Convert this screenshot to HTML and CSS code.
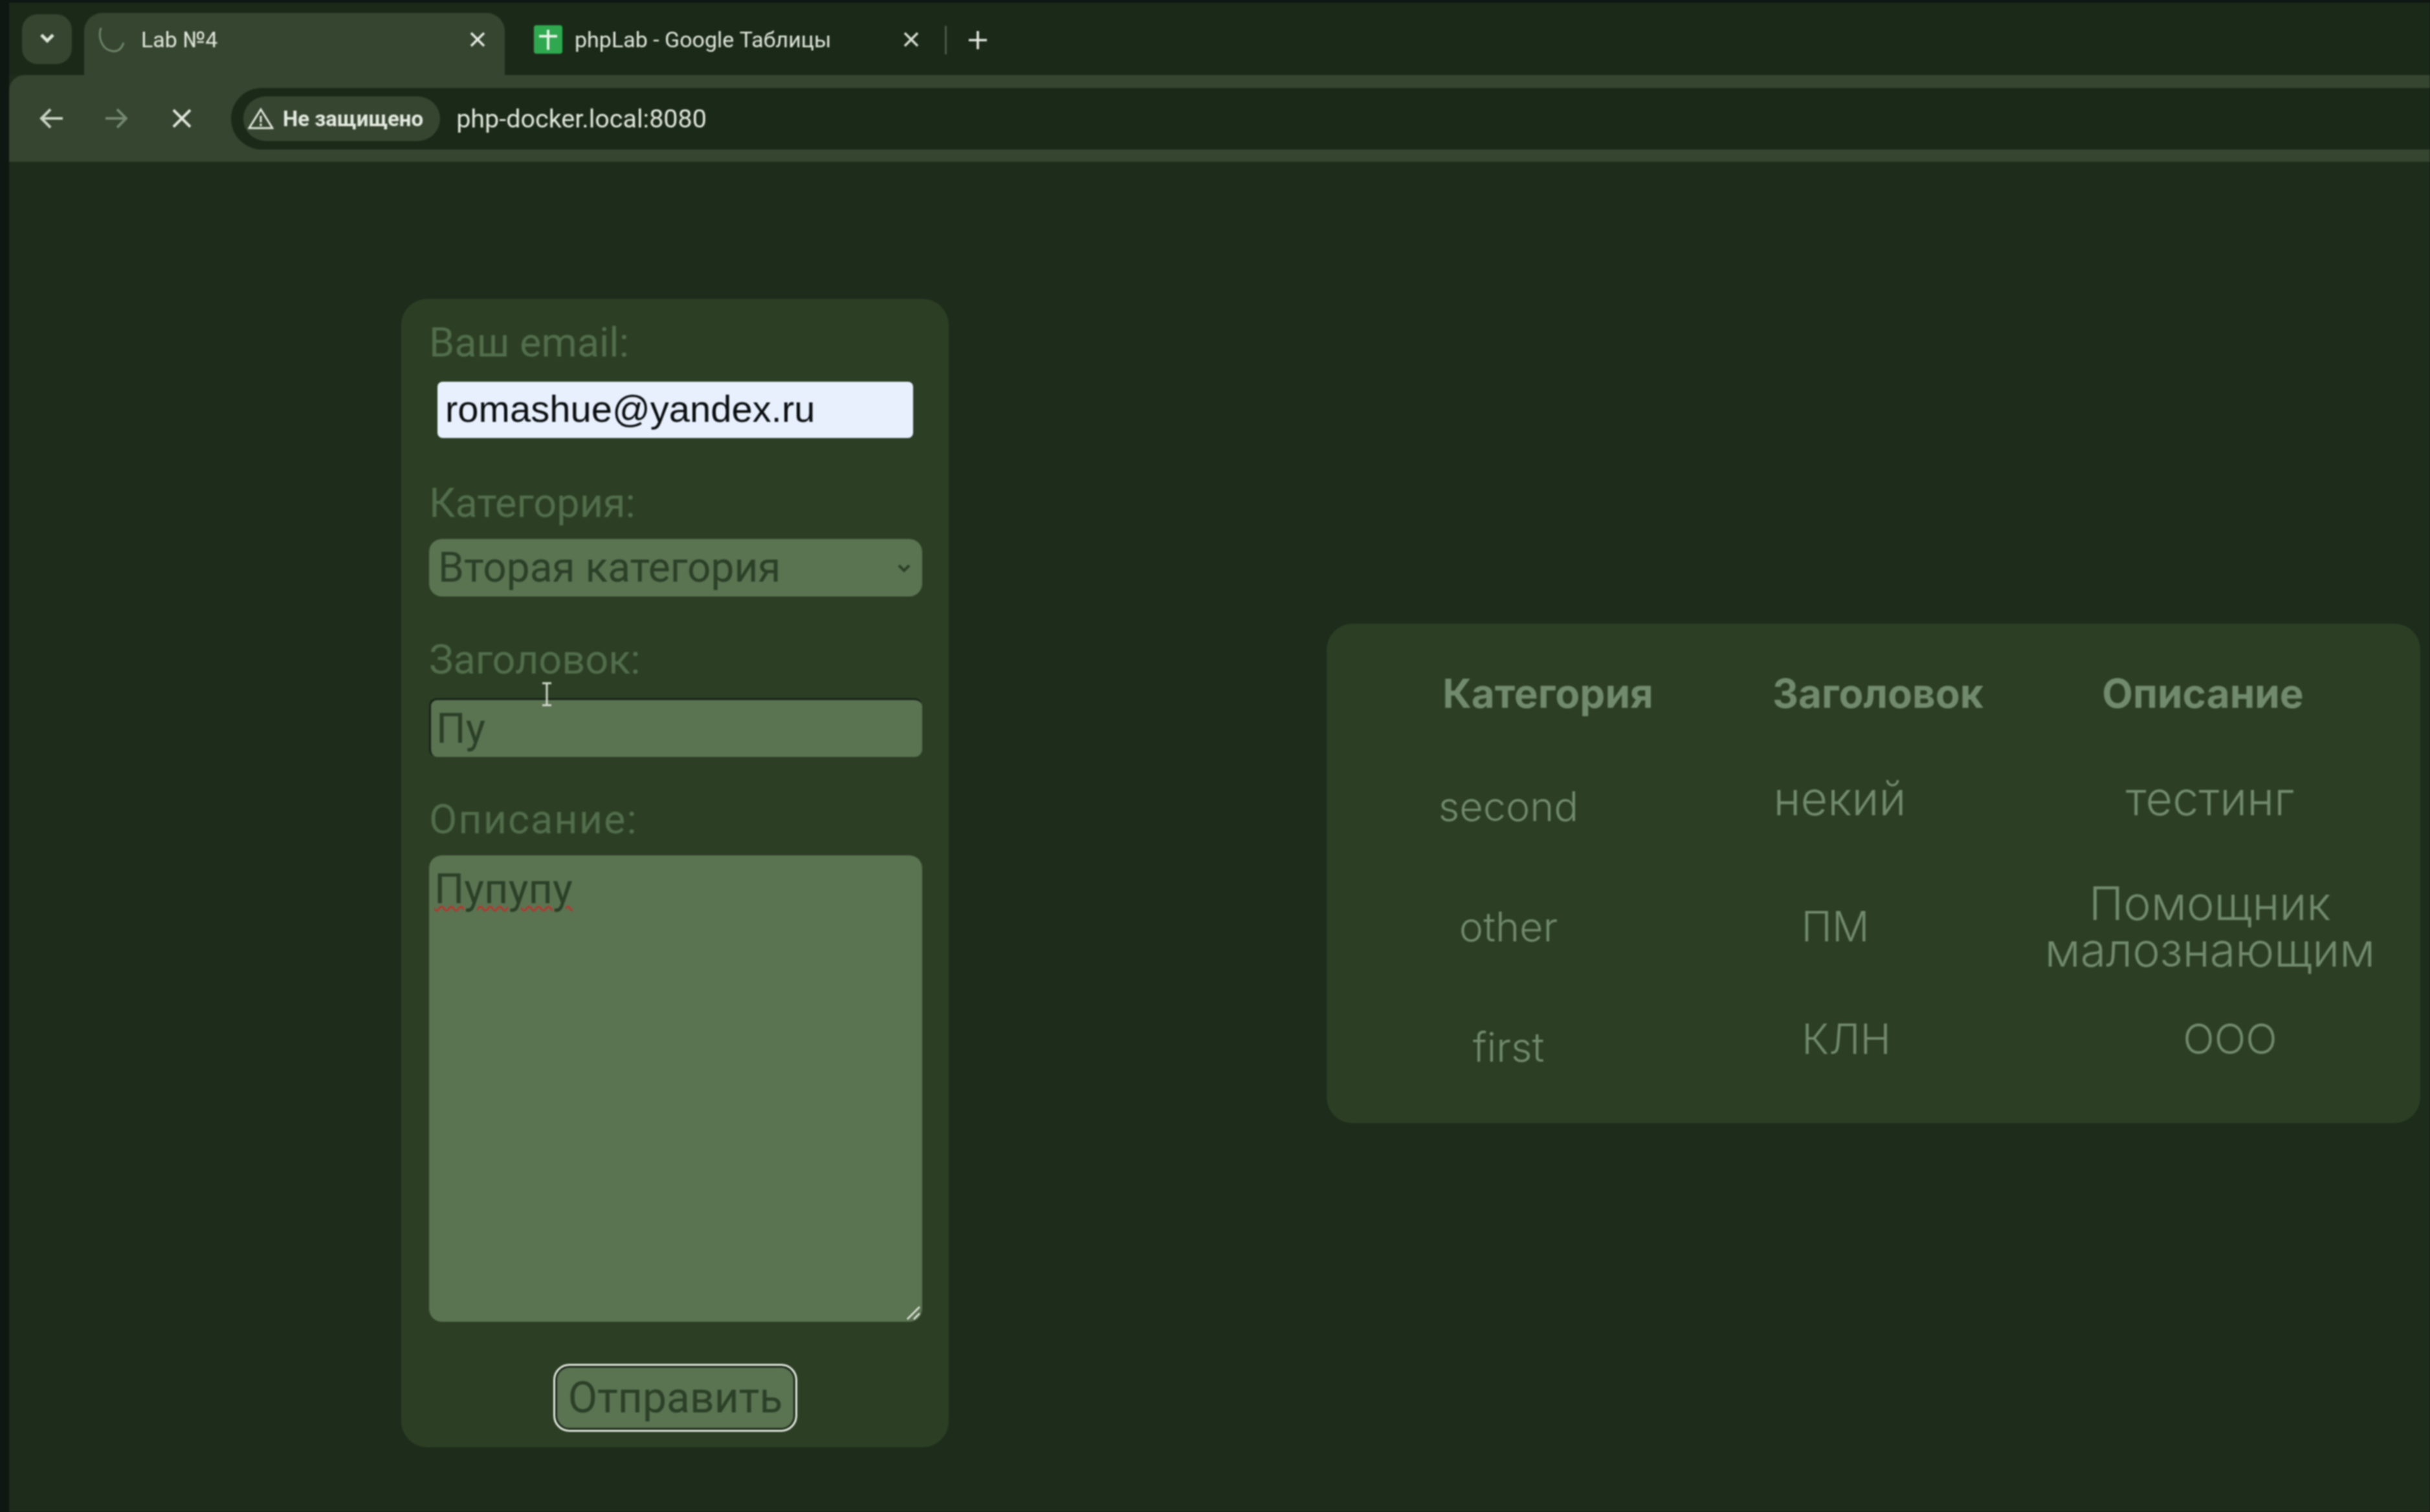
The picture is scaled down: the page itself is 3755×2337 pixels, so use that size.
FILE: index.html
```html
<!DOCTYPE html>
<html lang="ru">
<head>
    <meta charset="UTF-8">
    <title>Lab №4</title>
    <link rel="stylesheet" href="styles.css">
</head>
<body>
    <div class="window">
        <div class="tabstrip">
            <button class="tab-search" type="button">
                <svg width="26" height="18" viewBox="0 0 26 18"><path d="M4 4l9 9 9-9" fill="none" stroke="#dfe8da" stroke-width="5"/></svg>
            </button>
            <div class="tab tab-active">
                <svg class="spinner" width="44" height="44" viewBox="0 0 44 44"><path d="M6 4C1 18 7 38 24 40c8 1 14-4 17-13" fill="none" stroke="#6d8468" stroke-width="3"/></svg>
                <span class="tab-title">Lab №4</span>
                <svg class="tab-close" width="24" height="24" viewBox="0 0 24 24"><path d="M2 2l20 20M22 2L2 22" stroke="#e6ebe2" stroke-width="3.6"/></svg>
            </div>
            <div class="tab tab-sheets">
                <svg class="favicon" width="44" height="44" viewBox="0 0 44 44"><rect width="44" height="44" rx="4" fill="#2fa84f"/><path d="M22 7v31M8 17h28" stroke="#e4f3e4" stroke-width="4"/></svg>
                <span class="tab-title">phpLab - Google Таблицы</span>
                <svg class="tab-close" width="24" height="24" viewBox="0 0 24 24"><path d="M2 2l20 20M22 2L2 22" stroke="#d8dfd4" stroke-width="3.6"/></svg>
            </div>
            <span class="tab-sep"></span>
            <svg class="tab-new" width="32" height="32" viewBox="0 0 32 32"><path d="M16 2v28M2 16h28" stroke="#e6ebe2" stroke-width="3.6"/></svg>
        </div>
        <div class="toolbar">
            <svg class="nav-back" width="36" height="32" viewBox="0 0 36 32"><path d="M36 16H4M17 2L3 16l14 14" fill="none" stroke="#c9d4c3" stroke-width="4"/></svg>
            <svg class="nav-forward" width="34" height="32" viewBox="0 0 34 32"><path d="M0 16h31M18 2l14 14-14 14" fill="none" stroke="#74876f" stroke-width="4"/></svg>
            <svg class="nav-stop" width="30" height="30" viewBox="0 0 30 30"><path d="M2 2l26 26M28 2L2 28" stroke="#dfe6da" stroke-width="4"/></svg>
            <div class="omnibox">
                <div class="chip">
                    <svg width="40" height="34" viewBox="0 0 40 34"><path d="M20 3L2 32h36z" fill="none" stroke="#dfe6da" stroke-width="3"/><path d="M20 13v10M20 25v4" stroke="#dfe6da" stroke-width="3"/></svg>
                    <span>Не защищено</span>
                </div>
                <span class="url">php-docker.local:8080</span>
            </div>
        </div>
        <div class="page">
            <form class="panel form-panel">
                <div class="field field-email">
                    <label for="email">Ваш email:</label>
                    <input id="email" class="email-input" type="text" value="romashue@yandex.ru">
                </div>
                <div class="field field-category">
                    <label for="category">Категория:</label>
                    <div class="select-wrap">
                        <select id="category" class="control">
                            <option>Вторая категория</option>
                        </select>
                        <svg width="22" height="14" viewBox="0 0 22 14"><path d="M3 3l8 8 8-8" fill="none" stroke="#2b4027" stroke-width="4"/></svg>
                    </div>
                </div>
                <div class="field field-title">
                    <label for="title">Заголовок:</label>
                    <input id="title" class="control title-input" type="text" value="Пу">
                </div>
                <div class="field field-desc">
                    <label class="label-wide">Описание:</label>
                    <div class="control desc-input"><span class="typo">Пупупу</span>
                        <svg class="grip" width="24" height="24" viewBox="0 0 24 24"><path d="M3 22L22 3M13 22l9-9" stroke="#e4e9e0" stroke-width="2.5"/></svg>
                    </div>
                </div>
                <button class="send" type="button">Отправить</button>
                <svg class="ibeam" width="18" height="38" viewBox="0 0 18 38"><path d="M2 2h14M2 36h14M9 2v34" fill="none" stroke="#cfd9ca" stroke-width="3"/></svg>
            </form>
            <div class="panel table-panel">
                <div class="row row-head">
                    <span>Категория</span>
                    <span>Заголовок</span>
                    <span>Описание</span>
                </div>
                <div class="row">
                    <span class="cat">second</span>
                    <span class="big raised">некий</span>
                    <span class="big raised">тестинг</span>
                </div>
                <div class="row row-two">
                    <span class="cat">other</span>
                    <span class="short cell-pm">ПМ</span>
                    <span class="big">Помощник<br>малознающим</span>
                </div>
                <div class="row">
                    <span class="cat">first</span>
                    <span class="short raised cell-kln">КЛН</span>
                    <span class="short raised cell-ooo">ООО</span>
                </div>
            </div>
        </div>
    </div>
</body>
</html>
```

FILE: styles.css
```css
html,
body {
    margin: 0;
    height: 100%;
    background-color: #0e1712;
}

body {
    padding: 4px 0 0 14px;
    box-sizing: border-box;
    overflow: hidden;
    font-family: Roboto, sans-serif;
}

.window {
    height: 100%;
    display: flex;
    flex-direction: column;
    background-color: #1e2c1b;
    filter: blur(0.8px);
}

/* tabs */
.tabstrip {
    height: 112px;
    display: flex;
    align-items: flex-end;
    background-color: #1b2919;
    color: #dfe6da;
}

.tab-search {
    width: 77px;
    height: 77px;
    margin: 0 19px 17px 20px;
    padding: 0;
    border: none;
    border-radius: 24px;
    background-color: #364530;
}

.tab {
    width: 650px;
    height: 96px;
    display: flex;
    align-items: center;
    padding: 0 30px 14px 32px;
    box-sizing: border-box;
    font-size: 34px;
}

.tab-active {
    background-color: #364530;
    border-radius: 28px 28px 0 0;
    padding-left: 20px;
    margin-right: 8px;
}

.tab-sheets {
    width: 662px;
    padding-left: 37px;
}

.tab-title {
    flex: 1;
    white-space: nowrap;
}

.spinner {
    margin-right: 24px;
}

.favicon {
    margin-right: 19px;
}

.tab-sep {
    width: 3px;
    height: 44px;
    margin: 0 32px 32px 10px;
    background-color: #4a5a45;
}

.tab-new {
    margin-bottom: 38px;
}

/* toolbar */
.toolbar {
    height: 134px;
    display: flex;
    align-items: center;
    background-color: #364530;
    border-top-left-radius: 24px;
}

.nav-back {
    margin-left: 47px;
}

.nav-forward {
    margin-left: 66px;
}

.nav-stop {
    margin-left: 69px;
}

.omnibox {
    flex: 1;
    height: 95px;
    margin-left: 61px;
    display: flex;
    align-items: center;
    padding-left: 19px;
    background-color: #1b2919;
    border-radius: 48px 0 0 48px;
}

.chip {
    height: 69px;
    display: flex;
    align-items: center;
    gap: 14px;
    padding: 0 26px 0 7px;
    background-color: #364530;
    border-radius: 35px;
    color: #e3e9df;
    font-size: 33px;
    font-weight: 700;
}

.url {
    margin-left: 25px;
    color: #dfe6da;
    font-size: 39.5px;
}

/* page */
.page {
    flex: 1;
    display: flex;
    align-items: flex-start;
}

.panel {
    background-color: #2c3f24;
    border-radius: 40px;
    box-sizing: border-box;
}

.form-panel {
    position: relative;
    width: 846px;
    height: 1775px;
    margin: 212px 0 0 606px;
    padding: 33px 0 0 43px;
}

label {
    display: block;
    height: 70px;
    line-height: 70px;
    color: #516d4b;
    font-size: 63px;
}

.label-wide {
    letter-spacing: 2px;
}

.field {
    display: flex;
    flex-direction: column;
    align-items: flex-start;
}

.field-email {
    gap: 25px;
    margin-bottom: 66px;
}

.field-category {
    gap: 20px;
    margin-bottom: 63px;
}

.field-title {
    gap: 24px;
    margin-bottom: 62px;
}

.field-desc {
    gap: 20px;
    margin-bottom: 68px;
}

.email-input {
    width: 735px;
    height: 87px;
    margin-left: 13px;
    padding: 0 0 4px 12px;
    box-sizing: border-box;
    border: none;
    border-radius: 8px;
    background-color: #e8f0fe;
    color: #0b0f10;
    font-family: "Liberation Sans", sans-serif;
    font-size: 58px;
}

.control {
    width: 762px;
    box-sizing: border-box;
    border: none;
    background-color: #5a7351;
    color: #2b4027;
    font-family: Roboto, sans-serif;
    font-size: 64px;
}

.select-wrap {
    position: relative;
}

.select-wrap select {
    display: block;
    height: 89px;
    padding: 0 0 0 14px;
    border-radius: 20px;
    appearance: none;
}

.select-wrap svg {
    position: absolute;
    top: 38px;
    right: 17px;
}

.title-input {
    height: 91px;
    padding: 0 0 0 8px;
    border-top: 3px solid #18241a;
    border-left: 3px solid #18241a;
    border-radius: 12px;
}

.desc-input {
    position: relative;
    height: 721px;
    padding: 14px 0 0 8px;
    border-radius: 20px;
    font-size: 65px;
}

.typo {
    text-decoration: underline wavy #b5362e 3px;
    text-underline-offset: 4px;
}

.grip {
    position: absolute;
    right: 2px;
    bottom: 2px;
}

.send {
    display: block;
    width: 371px;
    height: 99px;
    margin: 1px 0 0 195px;
    padding: 0;
    border: 3px solid #1e2c1b;
    outline: 3px solid #e3e9df;
    outline-offset: 0;
    border-radius: 22px;
    background-color: #5a7351;
    color: #2b4027;
    font-family: Roboto, sans-serif;
    font-size: 66px;
}

.ibeam {
    position: absolute;
    left: 216px;
    top: 592px;
}

/* table */
.table-panel {
    width: 1690px;
    height: 772px;
    margin: 714px 0 0 584px;
    color: #71896c;
    font-family: Inter, sans-serif;
    line-height: 72px;
}

.row {
    height: 158px;
    display: grid;
    grid-template-columns: 562px 462px 682px;
    justify-items: center;
    align-items: center;
    text-align: center;
}

.row-head {
    grid-template-columns: 684px 336px 668px;
    height: 203px;
    padding: 72px 0 60px;
    box-sizing: border-box;
    font-weight: 700;
    font-size: 62px;
}

.row-two {
    height: 214px;
}

.cat {
    font-weight: 300;
    font-size: 63px;
}

.big {
    font-weight: 300;
    font-size: 72px;
}

.short {
    font-weight: 300;
    font-size: 64px;
}

.raised {
    margin-bottom: 24px;
}

.cell-pm {
    padding-right: 14px;
}

.cell-kln {
    padding-left: 20px;
}

.cell-ooo {
    padding-left: 62px;
}
```
